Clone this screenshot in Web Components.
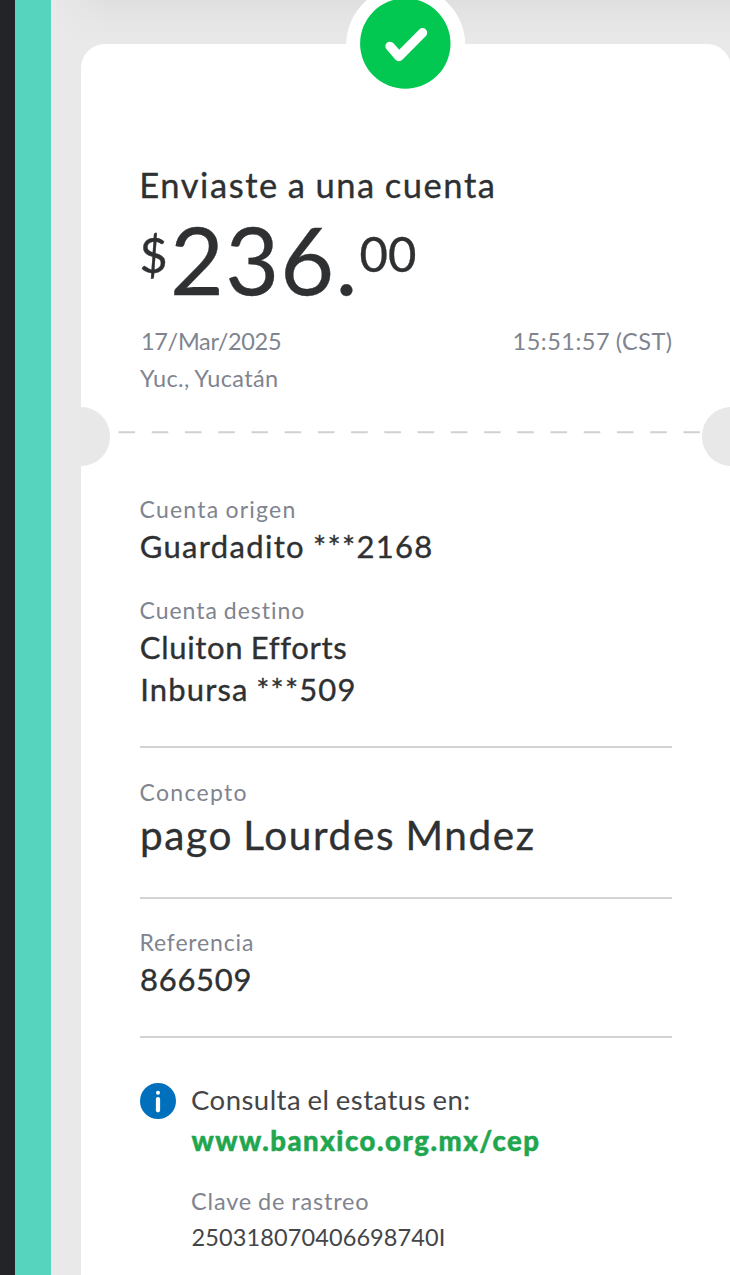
<!DOCTYPE html>
<html lang="es">
<head>
<meta charset="utf-8">
<title>Comprobante de envío</title>
<style>
html,body{margin:0;height:1275px;overflow:hidden;background:#e8e8e8;font-family:Lato,"Liberation Sans",sans-serif}
</style>
</head>
<body>
<receipt-screen>
  <receipt-card>
    <section-block slot="head">
      <text-line size="34.5" left="142.3" right="493" base="198" weight="400">Enviaste a una cuenta</text-line>
      <amount-row></amount-row>
      <split-row>
        <text-line size="23.5" left="142" right="281" base="350" tone="muted">17/Mar/2025</text-line>
        <text-line size="23.5" left="513.5" right="672" base="350" tone="muted">15:51:57 (CST)</text-line>
      </split-row>
      <text-line size="23.5" left="140" right="278" base="387" tone="muted">Yuc., Yucatán</text-line>
    </section-block>
    <section-block>
      <text-line size="23" left="140.5" right="294.5" base="518.3" tone="muted">Cuenta origen</text-line>
      <text-line size="31" left="140.8" right="431.5" base="558.6">Guardadito ***2168</text-line>
      <text-line size="23" left="140.5" right="304.5" base="618.8" tone="muted">Cuenta destino</text-line>
      <text-line size="31" left="140.8" right="346.5" base="659.3">Cluiton Efforts</text-line>
      <text-line size="31" left="142.3" right="354.5" base="701.3">Inbursa ***509</text-line>
      <rule-line y="746"></rule-line>
      <text-line size="23" left="140.5" right="246.5" base="801" tone="muted">Concepto</text-line>
      <text-line size="40.5" left="142" right="534" base="850">pago Lourdes Mndez</text-line>
      <rule-line y="897"></rule-line>
      <text-line size="23" left="141.5" right="252" base="951.2" tone="muted">Referencia</text-line>
      <text-line size="31" left="141" right="250.5" base="991.2">866509</text-line>
      <rule-line y="1036.5"></rule-line>
      <info-row>
        <text-line size="27.5" left="192.5" right="470" base="1110.2" tone="soft">Consulta el estatus en:</text-line>
        <text-line size="27.5" left="192" right="539" base="1151.2" tone="link" weight="900">www.banxico.org.mx/cep</text-line>
        <text-line size="23.5" left="192.5" right="369" base="1210" tone="muted">Clave de rastreo</text-line>
        <text-line size="23.5" left="193" right="444.5" base="1246" tone="soft">250318070406698740I</text-line>
      </info-row>
    </section-block>
  </receipt-card>
</receipt-screen>
<script>
const pen = document.createElement('canvas').getContext('2d');
const tones = {ink:'#2e3032', muted:'#80848f', soft:'#434547', link:'#1fa64f'};
const strokes = {ink:.35, muted:0, soft:0, link:.5};
function mount(el, html){ el.attachShadow({mode:'open'}).innerHTML = html; }

/* One line of type, tracked so its ink spans from left to right. */
class TextLine extends HTMLElement {
  connectedCallback(){
    const n = k => parseFloat(this.getAttribute(k));
    const size = n('size'), weight = this.getAttribute('weight') || 400, text = this.textContent;
    const tone = this.getAttribute('tone') || 'ink';
    const words = -size * 0.04;
    pen.font = `${weight} ${size}px Lato, "Liberation Sans", sans-serif`;
    pen.letterSpacing = '0.01px';
    pen.wordSpacing = words + 'px';
    const m = pen.measureText(text), left = n('left'), right = n('right');
    const track = (right - left - m.actualBoundingBoxRight - m.actualBoundingBoxLeft) / Math.max(1, text.length - 1);
    const height = Math.round(size * 1.2);
    const top = n('base') - height / 2 - size * 0.387;
    const column = this.closest('info-row') ? 192 : 140;
    mount(this, `<style>
      :host{display:block;white-space:pre;font-size:${size}px;font-weight:${weight};height:${height}px;line-height:${height}px;
        letter-spacing:${track}px;word-spacing:${words}px;color:${tones[tone]};-webkit-text-stroke:${strokes[tone]}px ${tones[tone]}}
    </style><slot></slot>`);
    this.top = top; this.bottom = top + height;
    this.inset = left + m.actualBoundingBoxLeft - column;
  }
}
class RuleLine extends HTMLElement {
  connectedCallback(){
    mount(this, `<style>:host{display:block;width:532px;height:2px;background:#d3d3d5}</style>`);
    this.top = +this.getAttribute('y'); this.bottom = this.top + 2; this.inset = -.5;
  }
}
/* Horizontal group whose members keep their own baseline and inset. */
class SplitRow extends HTMLElement {
  connectedCallback(){
    mount(this, `<style>:host{display:grid;align-items:start}::slotted(*){grid-area:1/1}</style><slot></slot>`);
  }
}
class AmountRow extends HTMLElement {
  connectedCallback(){
    mount(this, `<style>:host{display:grid;align-items:start}text-line{grid-area:1/1}</style>
      <text-line size="48.5" left="141.5" right="164.5" base="272.5">$</text-line>
      <text-line size="93" left="174" right="352.5" base="295.3">236.</text-line>
      <text-line size="49" left="360.5" right="415" base="272.5">00</text-line>`);
  }
}
class InfoRow extends HTMLElement {
  connectedCallback(){
    mount(this, `<style>
      :host{display:flex;gap:16px}
      svg{width:36px;height:36px;flex:none}
      div{flex:1;display:flex;flex-direction:column}
    </style>
    <svg viewBox="0 0 36 36"><circle cx="18" cy="18" r="18" fill="#0070bd"/><circle cx="18" cy="9.7" r="2" fill="#fff"/><path d="M18 16v11.3" stroke="#fff" stroke-width="4.2" stroke-linecap="round"/></svg>
    <div><slot></slot></div>`);
    this.top = 1083; this.inset = 0;
  }
}
class SectionBlock extends HTMLElement {
  connectedCallback(){
    mount(this, `<style>:host{display:flex;flex-direction:column;padding-left:60px}</style><slot></slot>`);
  }
}
class SuccessBadge extends HTMLElement {
  connectedCallback(){
    mount(this, `<style>:host{display:block;width:120px;height:120px}svg{display:block}</style>
    <svg width="120" height="120" viewBox="0 0 120 120"><circle cx="59.7" cy="60" r="59.5" fill="#fff"/><circle cx="59.3" cy="58.6" r="45.2" fill="#02c851"/><path d="M44 61.3l9 10.3L76.6 47.7" fill="none" stroke="#fff" stroke-width="9.3" stroke-linecap="round" stroke-linejoin="round"/></svg>`);
  }
}
class ReceiptCard extends HTMLElement {
  connectedCallback(){
    mount(this, `<style>
      :host{display:block;position:relative;box-sizing:border-box;width:650.5px;height:1240px;margin:44px 0 0 .5px;background:#fff;border-radius:24px 24px 0 0}
      success-badge{position:absolute;left:265.5px;top:-59px}
      .head{height:363px;display:flow-root}
      .tear{height:59px;display:flex;justify-content:space-between;align-items:flex-start}
      .tear i{width:29.5px;height:59px;background:#e8e8e8;border-radius:0 30px 30px 0}
      .tear i:last-child{border-radius:30px 0 0 30px}
      .tear svg{margin:24px 0 0 8px}
      .body{display:flow-root}
    </style>
    <success-badge></success-badge>
    <div class="head"><slot name="head"></slot></div>
    <div class="tear"><i></i><svg width="583" height="3"><path d="M0.5 1.3H582" stroke="#d1d1d5" stroke-width="2" stroke-dasharray="16.6 16.63"/></svg><i></i></div>
    <div class="body"><slot></slot></div>`);
  }
}
class ReceiptScreen extends HTMLElement {
  connectedCallback(){
    mount(this, `<style>
      :host{display:grid;grid-template-columns:15px 36px 1fr;width:730px;height:1275px;overflow:hidden}
      .edge{background:#232428}.band{background:#56d4bd}
      main{min-width:0;display:flow-root;padding-left:29px;
        background:linear-gradient(90deg,#e9e9e9,#e9e9e900 60px) 0 0/100% 44px no-repeat,linear-gradient(#dfdfdf,#e6e6e6 24px,#e9e9e9 44px)}
    </style><div class="edge"></div><div class="band"></div><main><slot></slot></main>`);
  }
}
for (const [tag, type] of [['text-line',TextLine],['rule-line',RuleLine],['split-row',SplitRow],['amount-row',AmountRow],['info-row',InfoRow],['section-block',SectionBlock],['success-badge',SuccessBadge],['receipt-card',ReceiptCard],['receipt-screen',ReceiptScreen]])
  customElements.define(tag, type);

/* Turn baselines into the gaps between successive rows. */
function space(items, start){
  let y = start;
  for (const el of items) {
    if (el.matches('split-row, amount-row')) {
      const lines = [...(el.matches('amount-row') ? el.shadowRoot.querySelectorAll('text-line') : el.children)];
      el.top = Math.min(...lines.map(l => l.top));
      el.bottom = Math.max(...lines.map(l => l.bottom));
      for (const l of lines) { l.style.marginTop = l.top - el.top + 'px'; l.style.marginLeft = l.inset + 'px'; }
      el.inset = 0;
    }
    if (el.matches('info-row')) space([...el.children], el.top);
    el.style.marginTop = el.top - y + 'px';
    el.style.marginLeft = el.inset - .5 + 'px';
    y = el.bottom;
  }
}
const [head, body] = document.querySelectorAll('section-block');
space([...head.children], 44);
space([...body.children], 466);
</script>
</body>
</html>
